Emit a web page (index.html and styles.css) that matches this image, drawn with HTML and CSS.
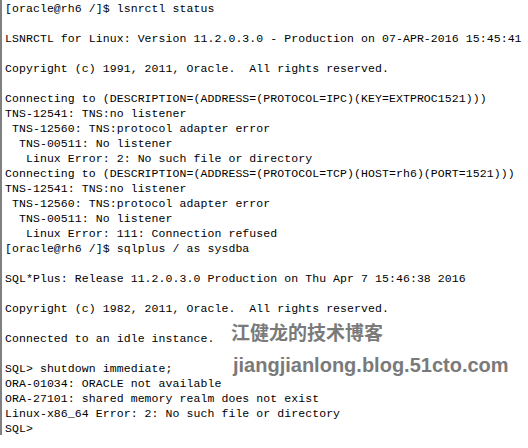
FILE: index.html
```html
<!DOCTYPE html>
<html>
<head>
<meta charset="utf-8">
<link rel="stylesheet" href="styles.css">
</head>
<body>
<div class="term">
<pre class="out">[oracle@rh6 /]$ lsnrctl status

LSNRCTL for Linux: Version 11.2.0.3.0 - Production on 07-APR-2016 15:45:41

Copyright (c) 1991, 2011, Oracle.  All rights reserved.

Connecting to (DESCRIPTION=(ADDRESS=(PROTOCOL=IPC)(KEY=EXTPROC1521)))
TNS-12541: TNS:no listener
 TNS-12560: TNS:protocol adapter error
  TNS-00511: No listener
   Linux Error: 2: No such file or directory
Connecting to (DESCRIPTION=(ADDRESS=(PROTOCOL=TCP)(HOST=rh6)(PORT=1521)))
TNS-12541: TNS:no listener
 TNS-12560: TNS:protocol adapter error
  TNS-00511: No listener
   Linux Error: 111: Connection refused
[oracle@rh6 /]$ sqlplus / as sysdba

SQL*Plus: Release 11.2.0.3.0 Production on Thu Apr 7 15:46:38 2016

Copyright (c) 1982, 2011, Oracle.  All rights reserved.

Connected to an idle instance.

SQL&gt; shutdown immediate;
ORA-01034: ORACLE not available
ORA-27101: shared memory realm does not exist
Linux-x86_64 Error: 2: No such file or directory
SQL&gt; </pre>
<div class="mark">
<div class="mark-cn">江健龙的技术博客</div>
<div class="mark-en">jiangjianlong.blog.51cto.com</div>
</div>
</div>
</body>
</html>
```

FILE: styles.css
```css
html, body {
  margin: 0;
  padding: 0;
  background: #ffffff;
}
.term {
  position: relative;
  width: 526px;
  height: 435px;
  border-left: 2px solid #808080;
  background: #ffffff;
}
.out {
  margin: 0;
  padding: 1px 0 0 3px;
  font-family: "Liberation Mono", "Courier New", monospace;
  font-size: 11.5px;
  letter-spacing: 0.08px;
  line-height: 15px;
  color: #000000;
}
.mark {
  position: absolute;
  left: 229px;
  top: 318px;
  color: #7a7a7a;
  font-weight: bold;
}
.mark-cn {
  font-family: "Noto Sans CJK SC", sans-serif;
  font-size: 19px;
  line-height: 28px;
}
.mark-en {
  font-family: "Liberation Sans", Arial, sans-serif;
  font-size: 20px;
  line-height: 28px;
  margin-top: 5px;
  padding-left: 2px;
}
```
